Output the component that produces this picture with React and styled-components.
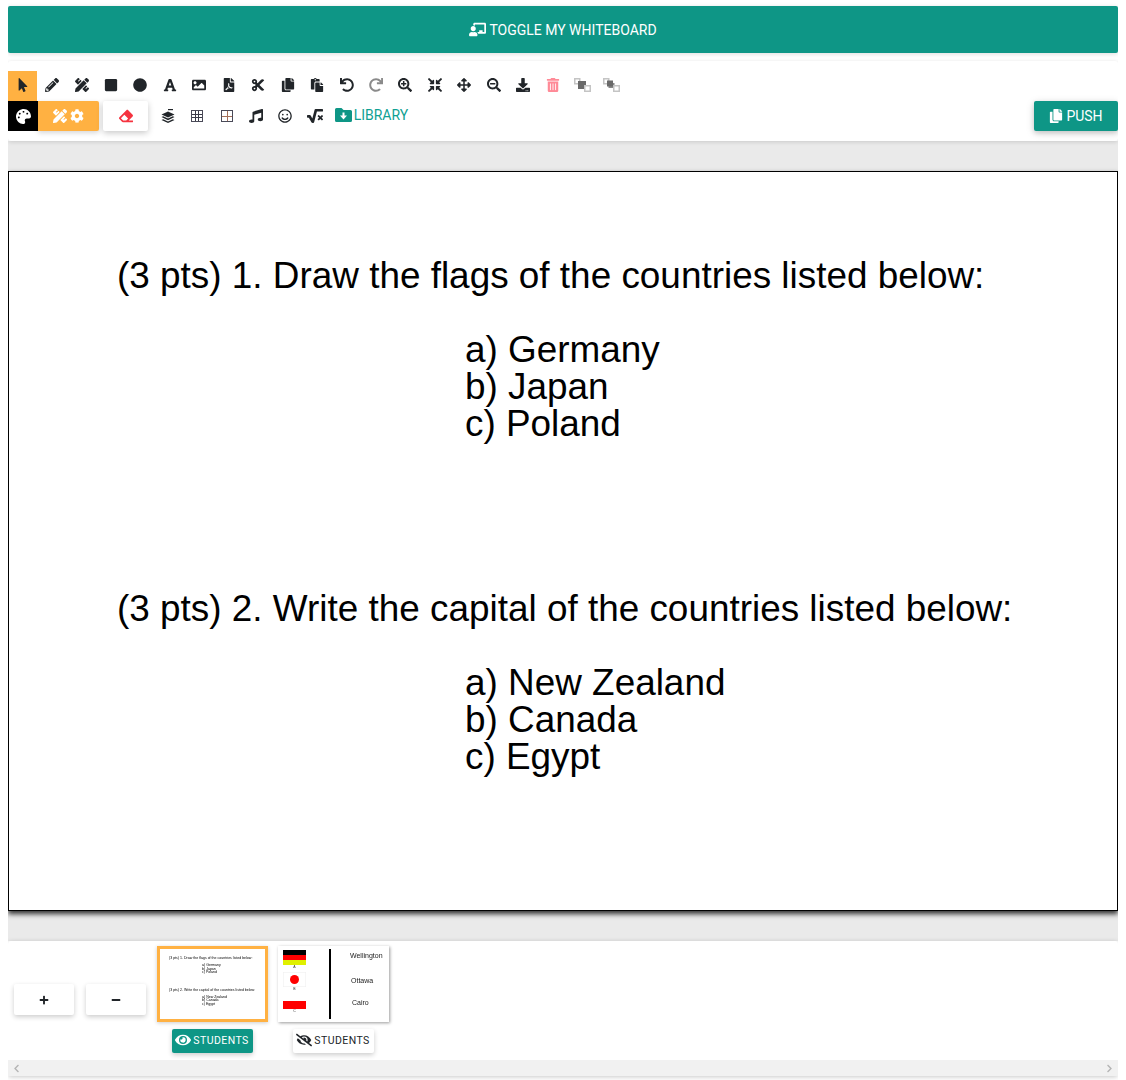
import React from "react";
import styled, { createGlobalStyle } from "styled-components";
import {
  FaMousePointer, FaPencilAlt, FaPencilRuler, FaSquare, FaCircle, FaFont, FaImage, FaFilePdf,
  FaCut, FaCopy, FaPaste, FaUndo, FaRedo, FaSearchPlus, FaCompressArrowsAlt, FaArrowsAlt,
  FaSearchMinus, FaDownload, FaTrashAlt, FaPalette, FaCog, FaEraser, FaMusic,
  FaRegSmile, FaSquareRootAlt, FaChalkboardTeacher, FaEye, FaEyeSlash, FaPlus, FaMinus,
  FaChevronLeft, FaChevronRight,
} from "react-icons/fa";

const TEAL = "#0e9686";
const ORANGE = "#ffb142";

const GlobalStyle = createGlobalStyle`
  html, body { margin: 0; padding: 0; background: #fff; }
  body { font-family: "Roboto", "Liberation Sans", sans-serif; color: #212529; }
`;

const Page = styled.div`
  width: 1110px;
  height: 1080px;
  margin: 0 8px;
  padding-top: 6px;
  box-sizing: border-box;
  overflow: hidden;
`;

const ToggleButton = styled.button`
  width: 100%;
  height: 47px;
  border: 0;
  border-radius: 2px;
  background: ${TEAL};
  color: #fff;
  font: 400 14px "Roboto", sans-serif;
  display: flex;
  align-items: center;
  justify-content: center;
  gap: 3px;
  box-shadow: 0 1px 5px rgba(0, 0, 0, 0.14);
  svg { font-size: 17px; }
`;

const Toolbar = styled.div`
  position: relative;
  z-index: 1;
  margin-top: 8px;
  height: 80px;
  box-sizing: border-box;
  padding-top: 10px;
  background: #fff;
  border-radius: 3px;
  box-shadow: 0 1px 4px rgba(0, 0, 0, 0.14);
`;

const ToolRow = styled.div`
  display: flex;
  align-items: center;
  height: 30px;
`;

const Tool = styled.div`
  width: 29.45px;
  height: 30px;
  flex: none;
  display: flex;
  align-items: center;
  justify-content: center;
  padding-bottom: ${(p) => p.$lift || 0}px;
  box-sizing: border-box;
  font-size: ${(p) => p.$size || 14}px;
  color: ${(p) => p.$color || "#212529"};
  background: ${(p) => p.$bg || "transparent"};
`;

const ColorSwatch = styled(Tool)`
  width: 30px;
  background: #000;
  color: #fff;
`;

const SettingsButton = styled.div`
  width: 61px;
  height: 30px;
  flex: none;
  background: ${ORANGE};
  border-radius: 0 2px 2px 0;
  color: #fff;
  font-size: 14px;
  display: flex;
  align-items: center;
  justify-content: center;
  gap: 3px;
  box-shadow: 0 2px 5px rgba(0, 0, 0, 0.16);
`;

const EraserButton = styled.div`
  width: 45px;
  height: 30px;
  flex: none;
  margin: 0 5px 0 4px;
  background: #fff;
  border-radius: 2px;
  color: #f5333f;
  font-size: 14px;
  display: flex;
  align-items: center;
  justify-content: center;
  box-shadow: 0 2px 6px rgba(0, 0, 0, 0.22);
`;

const LibraryLink = styled.div`
  display: flex;
  align-items: center;
  gap: 2px;
  margin-left: 5px;
  margin-bottom: 2px;
  color: #0fa193;
  font-size: 14px;
  font-weight: 400;
`;

const PushButton = styled.button`
  margin-left: auto;
  width: 84px;
  height: 30px;
  border: 0;
  border-radius: 2px;
  background: ${TEAL};
  color: #fff;
  font: 400 14px "Roboto", sans-serif;
  display: flex;
  align-items: center;
  justify-content: center;
  gap: 3px;
  box-shadow: 0 2px 5px rgba(0, 0, 0, 0.16), 0 2px 10px rgba(0, 0, 0, 0.12);
`;

const Stage = styled.div`
  background: #eaeaea;
  height: 800px;
  padding-top: 30px;
  box-sizing: border-box;
`;

const Canvas = styled.div`
  height: 740px;
  box-sizing: border-box;
  padding: 85px 0 0 108px;
  background: #fff;
  border: 1px solid #000;
  box-shadow: 0 3px 5px rgba(0, 0, 0, 0.8);
  font-family: "Liberation Sans", Arial, sans-serif;
  font-size: 36.9px;
  line-height: 37px;
  color: #000;
`;

const Question = styled.div`
  & + & { margin-top: 148px; }
`;

const QuestionTitle = styled.div`
  white-space: nowrap;
`;

const Answers = styled.div`
  margin: 37px 0 0 348px;
  white-space: nowrap;
`;

const BottomPanel = styled.div`
  position: relative;
  height: 135px;
  background: #fff;
  border-radius: 3px;
  box-shadow: 0 1px 5px rgba(0, 0, 0, 0.22);
  display: flex;
  flex-direction: column;
`;

const SlideStrip = styled.div`
  flex: 1;
  display: flex;
  align-items: flex-start;
  padding: 5px 0 0 6px;
`;

const ZoomButton = styled.div`
  width: 60px;
  height: 31px;
  flex: none;
  margin: 38px 12px 0 0;
  background: #fff;
  border-radius: 2px;
  display: flex;
  align-items: center;
  justify-content: center;
  font-size: 10px;
  color: #212529;
  box-shadow: 0 2px 5px rgba(0, 0, 0, 0.2);
  & + & { margin-right: 11px; }
`;

const SlideColumn = styled.div`
  width: 111px;
  flex: none;
  margin-right: 10px;
  display: flex;
  flex-direction: column;
  align-items: center;
  gap: 7px;
`;

const Thumb = styled.div`
  width: 111px;
  height: 76px;
  box-sizing: border-box;
  background: #fff;
  ${(p) =>
    p.$active
      ? `border: 3px solid ${ORANGE}; box-shadow: 0 1px 4px rgba(0,0,0,.2);`
      : "box-shadow: 1px 1px 3px rgba(0,0,0,.4);"}
`;

const MiniCanvas = styled.div`
  padding: 8px 0 0 9px;
  font-family: "Liberation Sans", Arial, sans-serif;
  font-size: 3.55px;
  line-height: 3.5px;
  color: #000;
  filter: blur(0.3px);
`;

const MiniQuestion = styled.div`
  white-space: nowrap;
  & + & { margin-top: 14px; }
`;

const MiniAnswers = styled.div`
  margin: 3.5px 0 0 33px;
`;

const AnswerSheet = styled.div`
  height: 100%;
  display: grid;
  grid-template-columns: 53px 1fr;
`;

const FlagColumn = styled.div`
  display: flex;
  flex-direction: column;
  align-items: flex-start;
  padding: 1px 0 0 5px;
  margin-top: 3px;
  height: 70px;
  box-sizing: border-box;
  border-right: 2px solid #000;
`;

const FlagLabel = styled.div`
  width: 23px;
  height: 7px;
  text-align: center;
  font: 3.5px/5px "Liberation Sans", sans-serif;
  color: #333;
  filter: blur(0.2px);
`;

const Flag = styled.div`
  width: 23px;
  height: 15px;
  flex: none;
  display: flex;
  flex-direction: column;
  box-sizing: border-box;
  align-items: center;
  justify-content: ${(p) => (p.$center ? "center" : "flex-start")};
  box-shadow: inset 0 0 0 0.5px #eee;
`;

const Stripe = styled.div`
  width: 100%;
  height: ${(p) => p.$h}px;
  flex: none;
  background: ${(p) => p.$c};
`;

const JapanDot = styled.div`
  width: 9px;
  height: 9px;
  border-radius: 50%;
  background: #f00;
`;

const CapitalColumn = styled.div`
  padding-top: 6px;
  font: 7px/1 "Liberation Sans", sans-serif;
  color: #222;
  display: flex;
  flex-direction: column;
  filter: blur(0.3px);
`;

const Capital = styled.div`
  height: ${(p) => p.$h}px;
  padding-left: ${(p) => p.$x}px;
  white-space: nowrap;
`;

const StudentsButton = styled.div`
  height: 24px;
  box-sizing: border-box;
  display: flex;
  align-items: center;
  gap: 2px;
  padding: 0 4px 2px 3px;
  border-radius: 2px;
  font-size: 10.5px;
  letter-spacing: 0.45px;
  background: ${(p) => (p.$on ? TEAL : "#fff")};
  color: ${(p) => (p.$on ? "#fff" : "#212529")};
  box-shadow: 0 2px 5px rgba(0, 0, 0, 0.2);
  svg { font-size: 16px; }
`;

const ScrollBar = styled.div`
  height: 16px;
  flex: none;
  background: #f1f1f1;
  display: flex;
  align-items: center;
  justify-content: space-between;
  padding: 0 4px;
  font-size: 9px;
  color: #b4b4b4;
`;

const GridIcon = ({ cells }) => (
  <svg width="14" height="14" viewBox="0 0 14 14" fill="none">
    <rect x="1.5" y="1.5" width="11" height="11" stroke="#4a4a58" strokeWidth="1" />
    {cells === 3 ? (
      <path d="M5.5 2v10M8.5 2v10M2 5.5h10M2 8.5h10" stroke="#3a3a48" strokeWidth="1" />
    ) : (
      <path d="M7.5 2v10M2 7.5h10" stroke="#a5705a" strokeWidth="1" />
    )}
  </svg>
);

const GroupIcon = ({ split }) => (
  <svg width="17" height="14" viewBox="0 0 17 14">
    <rect x="0.75" y="0.75" width="5" height="5" fill="none" stroke="#c4c4c4" strokeWidth="1.5" />
    {split ? (
      <>
        <rect x="4" y="2.5" width="6" height="6" fill="#6a6a6a" />
        <rect x="5.5" y="5" width="6" height="5" fill="#6a6a6a" opacity="0.8" />
      </>
    ) : (
      <rect x="4" y="3" width="8" height="8" fill="#6a6a6a" />
    )}
    <rect x="10.75" y="7.75" width="5.5" height="5.5" fill="#fff" stroke="#c4c4c4" strokeWidth="1.5" />
  </svg>
);

const LayerIcon = () => (
  <svg width="14" height="15" viewBox="0 0 14 15">
    <rect x="7" y="0" width="5" height="1.2" fill="#212529" />
    <path d="M7 2.5l6.5 3L7 8.5 .5 5.5z" fill="#212529" />
    <path d="M2.2 7.3L.5 8.1 7 11.2l6.5-3.1-1.7-.8L7 9.6z" fill="#212529" />
    <path d="M2.2 10.2l-1.7.8L7 14l6.5-3-1.7-.8L7 12.5z" fill="#212529" />
  </svg>
);

const FolderDownIcon = () => (
  <svg width="17" height="14" viewBox="0 0 17 14">
    <path
      d="M1.5 0h5l2 2h7A1.5 1.5 0 0 1 17 3.5v9a1.5 1.5 0 0 1-1.5 1.5h-14A1.5 1.5 0 0 1 0 12.5v-11A1.5 1.5 0 0 1 1.5 0z"
      fill={TEAL}
    />
    <path d="M7.5 4.5h2v3H12l-3.5 4-3.5-4h2.5z" fill="#fff" />
  </svg>
);

const topTools = [
  [FaMousePointer, ""],
  [FaPencilAlt, ""],
  [FaPencilRuler, ""],
  [FaSquare, ""],
  [FaCircle, ""],
  [FaFont, ""],
  [FaImage, ""],
  [FaFilePdf, ""],
  [FaCut, ""],
  [FaCopy, ""],
  [FaPaste, ""],
  [FaUndo, ""],
  [FaRedo, "#8a8a8a"],
  [FaSearchPlus, ""],
  [FaCompressArrowsAlt, ""],
  [FaArrowsAlt, ""],
  [FaSearchMinus, ""],
  [FaDownload, ""],
  [FaTrashAlt, "#ff8a97"],
];

const questions = [
  {
    title: "(3 pts) 1. Draw the flags of the countries listed below:",
    answers: ["a) Germany", "b) Japan", "c) Poland"],
  },
  {
    title: "(3 pts) 2. Write the capital of the countries listed below:",
    answers: ["a) New Zealand", "b) Canada", "c) Egypt"],
  },
];

const App = () => {
  return (
    <Page>
      <GlobalStyle />
      <ToggleButton>
        <FaChalkboardTeacher />
        TOGGLE MY WHITEBOARD
      </ToggleButton>

      <Toolbar>
        <ToolRow>
          {topTools.map(([Icon, color], i) => (
            <Tool key={i} $bg={i === 0 ? ORANGE : ""} $color={color} $lift={2}>
              <Icon />
            </Tool>
          ))}
          <Tool $lift={2}>
            <GroupIcon />
          </Tool>
          <Tool $lift={2}>
            <GroupIcon split />
          </Tool>
        </ToolRow>
        <ToolRow>
          <ColorSwatch $size={15}>
            <FaPalette />
          </ColorSwatch>
          <SettingsButton>
            <FaPencilRuler />
            <FaCog />
          </SettingsButton>
          <EraserButton>
            <FaEraser />
          </EraserButton>
          <Tool>
            <LayerIcon />
          </Tool>
          <Tool>
            <GridIcon cells={3} />
          </Tool>
          <Tool>
            <GridIcon cells={2} />
          </Tool>
          <Tool>
            <FaMusic />
          </Tool>
          <Tool>
            <FaRegSmile />
          </Tool>
          <Tool $size={16}>
            <FaSquareRootAlt />
          </Tool>
          <LibraryLink>
            <FolderDownIcon />
            LIBRARY
          </LibraryLink>
          <PushButton>
            <FaCopy />
            PUSH
          </PushButton>
        </ToolRow>
      </Toolbar>

      <Stage>
        <Canvas>
          {questions.map((q) => (
            <Question key={q.title}>
              <QuestionTitle>{q.title}</QuestionTitle>
              <Answers>
                {q.answers.map((a) => (
                  <div key={a}>{a}</div>
                ))}
              </Answers>
            </Question>
          ))}
        </Canvas>
      </Stage>

      <BottomPanel>
        <SlideStrip>
          <ZoomButton>
            <FaPlus />
          </ZoomButton>
          <ZoomButton>
            <FaMinus />
          </ZoomButton>
          <SlideColumn>
            <Thumb $active>
              <MiniCanvas>
                {questions.map((q) => (
                  <MiniQuestion key={q.title}>
                    <div>{q.title}</div>
                    <MiniAnswers>
                      {q.answers.map((a) => (
                        <div key={a}>{a}</div>
                      ))}
                    </MiniAnswers>
                  </MiniQuestion>
                ))}
              </MiniCanvas>
            </Thumb>
            <StudentsButton $on>
              <FaEye />
              STUDENTS
            </StudentsButton>
          </SlideColumn>
          <SlideColumn>
            <Thumb>
              <AnswerSheet>
                <FlagColumn>
                  <Flag>
                    <Stripe $h={5} $c="#000" />
                    <Stripe $h={5} $c="#f00" />
                    <Stripe $h={5} $c="#e0f000" />
                  </Flag>
                  <FlagLabel>A</FlagLabel>
                  <Flag $center>
                    <JapanDot />
                  </Flag>
                  <FlagLabel>B</FlagLabel>
                  <Flag $center>
                    <Stripe $h={7} $c="#fff" />
                    <Stripe $h={8} $c="#f00" />
                  </Flag>
                  <FlagLabel>C</FlagLabel>
                </FlagColumn>
                <CapitalColumn>
                  <Capital $h={25} $x={19}>Wellington</Capital>
                  <Capital $h={22} $x={20}>Ottawa</Capital>
                  <Capital $h={20} $x={21}>Cairo</Capital>
                </CapitalColumn>
              </AnswerSheet>
            </Thumb>
            <StudentsButton>
              <FaEyeSlash />
              STUDENTS
            </StudentsButton>
          </SlideColumn>
        </SlideStrip>
        <ScrollBar>
          <FaChevronLeft />
          <FaChevronRight />
        </ScrollBar>
      </BottomPanel>
    </Page>
  );
};

export default App;
